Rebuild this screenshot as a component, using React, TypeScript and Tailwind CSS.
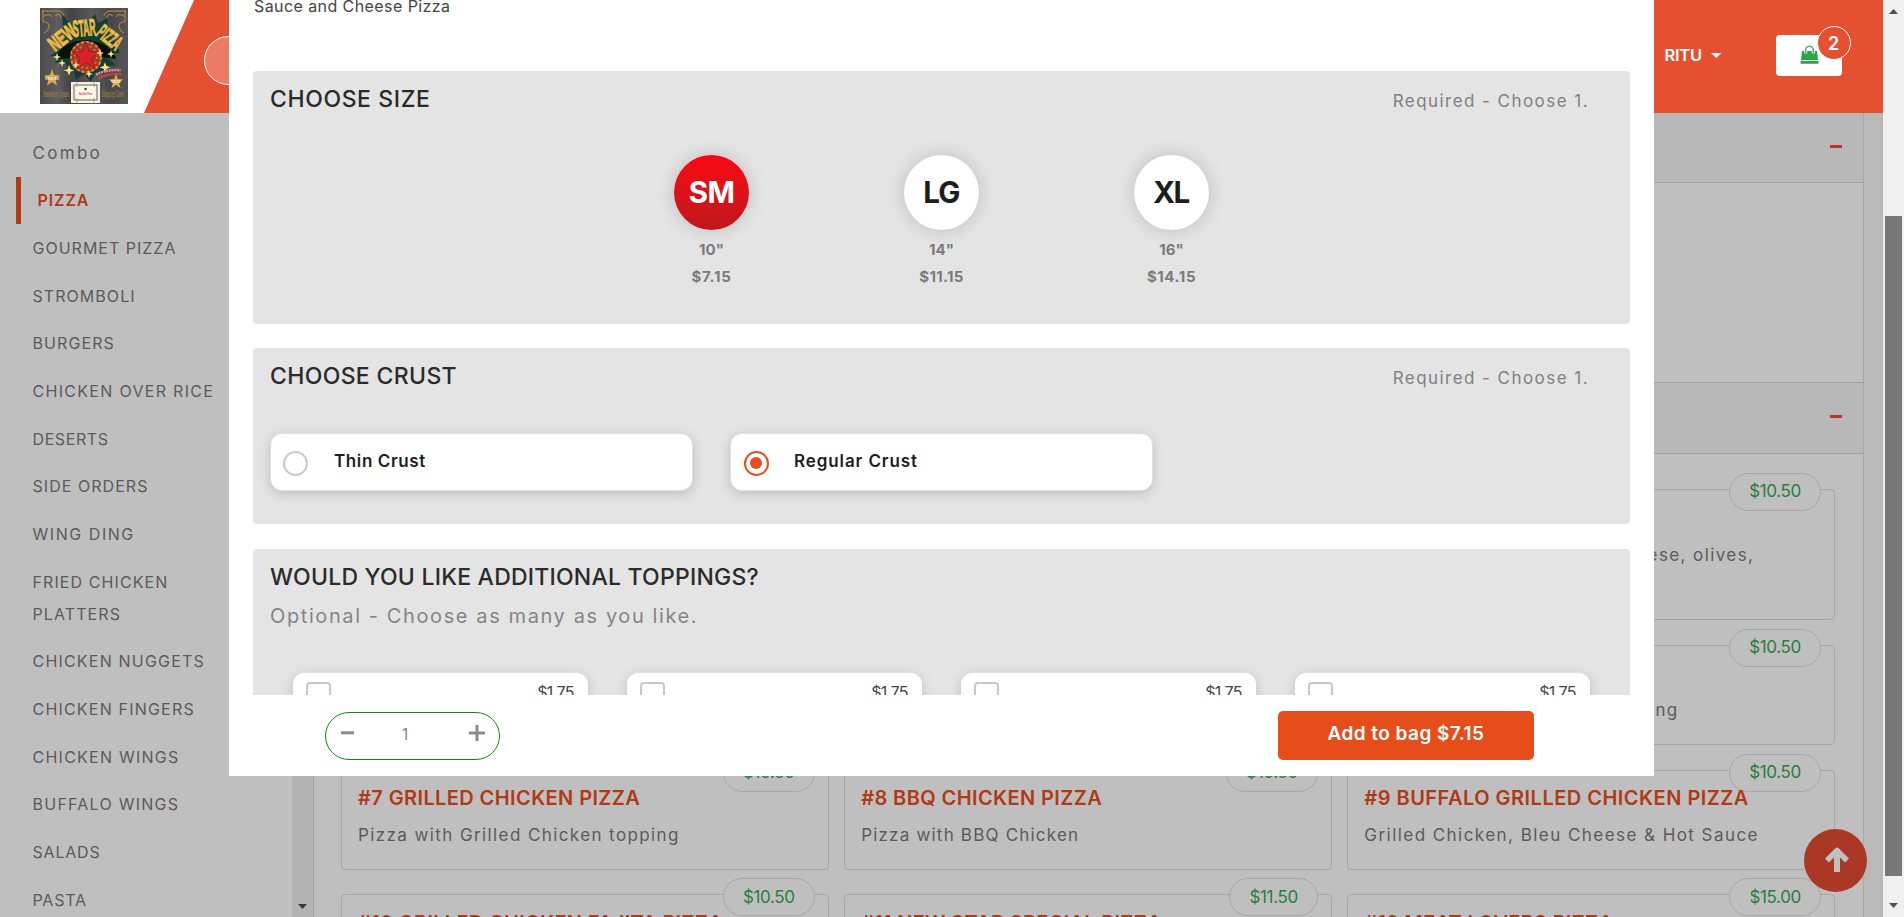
type MenuItem = { label: string; tracking: string; active?: boolean };

const menu: MenuItem[] = [
  { label: "Combo", tracking: "text-[17px] tracking-[2.3px]" },
  { label: "PIZZA", tracking: "text-[16px] tracking-[0.9px]", active: true },
  { label: "GOURMET PIZZA", tracking: "text-[16px] tracking-[1px]" },
  { label: "STROMBOLI", tracking: "text-[16px] tracking-[1.05px]" },
  { label: "BURGERS", tracking: "text-[16px] tracking-[1.1px]" },
  { label: "CHICKEN OVER RICE", tracking: "text-[16px] tracking-[1.3px]" },
  { label: "DESERTS", tracking: "text-[16px] tracking-[0.6px]" },
  { label: "SIDE ORDERS", tracking: "text-[16px] tracking-[1.05px]" },
  { label: "WING DING", tracking: "text-[16px] tracking-[1.55px]" },
  { label: "FRIED CHICKEN PLATTERS", tracking: "text-[16px] tracking-[1.1px]" },
  { label: "CHICKEN NUGGETS", tracking: "text-[16px] tracking-[1.2px]" },
  { label: "CHICKEN FINGERS", tracking: "text-[16px] tracking-[1.2px]" },
  { label: "CHICKEN WINGS", tracking: "text-[16px] tracking-[1.25px]" },
  { label: "BUFFALO WINGS", tracking: "text-[16px] tracking-[1.25px]" },
  { label: "SALADS", tracking: "text-[16px] tracking-[0.8px]" },
  { label: "PASTA", tracking: "text-[16px] tracking-[0.8px]" },
];

type Dish = {
  price: string;
  title?: string;
  text?: string;
  titleStyle?: string;
  textStyle?: string;
};

const dishes: Dish[] = [
  { price: "$10.50" },
  { price: "$10.50" },
  { price: "$10.50", text: "ese, olives,", textStyle: "w-[390px] text-right tracking-[1.4px]" },
  { price: "$10.50" },
  { price: "$10.50" },
  { price: "$10.50", text: "ng", textStyle: "w-[314px] text-right tracking-[1.2px]" },
  {
    price: "$10.50",
    title: "#7 GRILLED CHICKEN PIZZA",
    titleStyle: "tracking-[0.4px]",
    text: "Pizza with Grilled Chicken topping",
    textStyle: "tracking-[1.4px]",
  },
  {
    price: "$10.50",
    title: "#8 BBQ CHICKEN PIZZA",
    titleStyle: "tracking-[0.4px]",
    text: "Pizza with BBQ Chicken",
    textStyle: "tracking-[1.2px]",
  },
  {
    price: "$10.50",
    title: "#9 BUFFALO GRILLED CHICKEN PIZZA",
    titleStyle: "tracking-[0.48px]",
    text: "Grilled Chicken, Bleu Cheese & Hot Sauce",
    textStyle: "tracking-[1.45px]",
  },
  { price: "$10.50", title: "#10 GRILLED CHICKEN FAJITA PIZZA", titleStyle: "tracking-[0.3px]" },
  { price: "$11.50", title: "#11 NEW STAR SPECIAL PIZZA", titleStyle: "tracking-[0.3px]" },
  { price: "$15.00", title: "#12 MEAT LOVERS PIZZA", titleStyle: "tracking-[0.3px]" },
];

const sizes = [
  { code: "SM", inches: '10"', price: "$7.15", selected: true, codeStyle: "tracking-[-0.7px]", priceStyle: "tracking-[0.7px]" },
  { code: "LG", inches: '14"', price: "$11.15", selected: false, codeStyle: "tracking-[-0.8px]", priceStyle: "tracking-[0.3px]" },
  { code: "XL", inches: '16"', price: "$14.15", selected: false, codeStyle: "-ml-px tracking-[-1.5px]", priceStyle: "tracking-[0.6px]" },
];

function Logo() {
  return (
    <svg width="88" height="96" viewBox="0 0 88 96">
      <defs>
        <linearGradient id="wood" x1="0" x2="1" y1="0" y2="0">
          <stop offset="0" stopColor="#4b4b4d" />
          <stop offset="0.2" stopColor="#5d5d60" />
          <stop offset="0.35" stopColor="#434345" />
          <stop offset="0.6" stopColor="#5a5a5d" />
          <stop offset="0.8" stopColor="#48484a" />
          <stop offset="1" stopColor="#555557" />
        </linearGradient>
        <linearGradient id="gold" x1="0" x2="0" y1="0" y2="1">
          <stop offset="0" stopColor="#fbe67a" />
          <stop offset="0.55" stopColor="#e3ab33" />
          <stop offset="1" stopColor="#f8dc6c" />
        </linearGradient>
      </defs>
      <rect width="88" height="96" fill="url(#wood)" />
      <path
        d="M22 6 L31 17 L38 11 L44 18 L55 6 L58 15 L68 10 L67 22 L80 44 L67 50 L76 57 L66 58 L65 67 L56 64 L51 74 L44 66 L36 72 L34 64 L24 64 L28 57 L14 54 L24 49 L10 48 L25 38 Z"
        fill="#123f33"
      />
      <path d="M17 51 C20 26 70 26 76 51 L62 49 C58 31 35 31 30 50 Z" fill="#07120f" />
      <circle cx="46" cy="49" r="16" fill="#a53a20" />
      <circle cx="46" cy="49" r="15" fill="none" stroke="#d28842" strokeWidth="2" strokeDasharray="3 2" />
      <circle cx="46" cy="49" r="11" fill="none" stroke="#c9773c" strokeWidth="2" strokeDasharray="2 3" />
      <path
        d="M46 34 L49.5 44 L60 44 L51.5 50 L55 61 L46 54 L37 61 L40 50 L32 44 L43 44 Z"
        fill="#e01f2c"
        stroke="#8d1420"
        strokeWidth="0.7"
      />
      <g fontFamily="Liberation Sans" fontWeight="700" fill="url(#gold)" stroke="#e8b840" strokeWidth="0.6">
        <text transform="translate(15 44) rotate(-38) scale(1.05 1.750)" fontSize="12">NEW</text>
        <text transform="translate(33.500 29) rotate(-5) scale(0.72 1.950)" fontSize="12">STAR</text>
        <text transform="translate(55 27) rotate(38) scale(0.75 1.750)" fontSize="12">PIZZA</text>
      </g>
      <g fill="none" stroke="#c48f32" strokeWidth="1">
        <path d="M2 3 H18 Q24 4 24 8 M3 2 V14 Q9 13 9 19 Q8 24 4 25 M4 8 Q10 5 12 9 M15 8 Q20 4 21 10" />
        <path d="M86 3 H70 Q64 4 64 8 M85 2 V14 Q79 13 79 19 Q80 24 84 25 M84 8 Q78 5 76 9 M73 8 Q68 4 67 10" />
      </g>
      <g fill="#f5e28a">
        <path d="M17 45l1 3 3 1-3 1-1 3-1-3-3-1 3-1zM22 51l1 3 3 1-3 1-1 3-1-3-3-1 3-1zM29 57l1.4 4 4 1.400-4 1.400-1.400 4-1.400-4-4-1.400 4-1.400zM60 41l1 3 3 1-3 1-1 3-1-3-3-1 3-1zM71 42l1 3 3 1-3 1-1 3-1-3-3-1 3-1zM65 54l1.400 4 4 1.400-4 1.400-1.400 4-1.400-4-4-1.400 4-1.400zM49 62l1 3 3 1-3 1-1 3-1-3-3-1 3-1zM36 53l1 3 3 1-3 1-1 3-1-3-3-1 3-1z" />
        <path d="M12 61l2 6 6 .5-4.500 4 1.500 6-5-3.500-5 3.500 1.500-6-4.500-4 6-.5zM76 66l2 5 5 .5-4 3.500 1.500 5-4.500-3-4.500 3 1.500-5-4-3.500 5-.5z" fill="#dcab42" />
      </g>
      <g fontFamily="Liberation Serif" fontWeight="700">
        <text x="5" y="72" fontSize="5" fill="#fff" textLength="14" lengthAdjust="spacingAndGlyphs">SAUCES</text>
        <text x="71" y="75" fontSize="4.500" fill="#fff" textLength="10" lengthAdjust="spacingAndGlyphs">TRAY</text>
        <text x="3" y="89" fontSize="10" fontWeight="400" fill="#b58a34" textLength="26" lengthAdjust="spacingAndGlyphs">Strawberry Square</text>
        <text x="62" y="89" fontSize="10" fontWeight="400" fill="#b58a34" textLength="22" lengthAdjust="spacingAndGlyphs">Shopping Center</text>
      </g>
      <g transform="rotate(-8 68 66)" fill="none" strokeWidth="2.600" strokeDasharray="2 0.7">
        <path d="M56 65 Q68 61 81 64" stroke="#f08a92" />
        <path d="M58 69 Q69 65 81 68" stroke="#d94450" />
      </g>
      <rect x="31" y="74" width="29" height="21" fill="#f6f1dd" />
      <rect x="34" y="77" width="23" height="15" fill="none" stroke="#444" strokeWidth="0.8" />
      <path d="M37 74v21M54 74v21" stroke="#777" strokeWidth="0.5" />
      <rect x="36" y="79" width="19" height="11" fill="#fbf8ea" />
      <circle cx="45.500" cy="81" r="1.200" fill="#333" />
      <text x="39" y="87" fontSize="3.500" fontFamily="Liberation Sans" fontWeight="700" fill="#d8252b" textLength="13" lengthAdjust="spacingAndGlyphs">
        New Star Pizza
      </text>
    </svg>
  );
}

function Header() {
  return (
    <header className="flex h-[113px] w-full shrink-0 bg-[#e55031]">
      <div className="flex h-full w-[194px] shrink-0 items-start bg-white pl-10 pt-2 [clip-path:polygon(0_0,100%_0,144px_100%,0_100%)]">
        <Logo />
      </div>
      <div className="ml-[10px] mt-9 h-[49px] w-[300px] shrink-0 rounded-full border border-white bg-[#ec7a65]" />
      <div className="ml-auto flex h-full items-start pr-[41px]">
        <div className="mt-[43px] flex h-6 items-center text-[16.500px] font-semibold tracking-[-0.2px] text-white">
          RITU
          <svg className="ml-[9px] mt-px" width="11" height="6" viewBox="0 0 11 6">
            <path d="M0 0h10.500L5.250 5z" fill="#fff" />
          </svg>
        </div>
        <div className="relative ml-[54px] mt-[35px] h-[41px] w-[66px] rounded bg-white">
          <svg className="absolute left-6 top-[10px]" width="20" height="20" viewBox="0 0 20 20">
            <path d="M2 6h15l1 9H1zM.7 16h17.800v2.700H.5z" fill="#28a745" />
            <path d="M5.700 8.500V5a3.800 3.800 0 0 1 7.600 0v3.500" fill="none" stroke="#fff" strokeWidth="3" />
            <path d="M5.700 8.500V5a3.800 3.800 0 0 1 7.600 0v3.500" fill="none" stroke="#4fae69" strokeWidth="1.500" />
          </svg>
          <span className="absolute left-[41px] top-[-9px] flex size-[34px] items-center justify-center rounded-full border border-white bg-[#e55031] pr-px text-[18px] font-semibold text-white">
            2
          </span>
        </div>
      </div>
    </header>
  );
}

function Sidebar() {
  return (
    <nav className="w-[292px] shrink-0 overflow-hidden bg-[#bfbfbf] pt-4 text-[#5b5b5b]">
      {menu.map((item) => (
        <div
          key={item.label}
          className={
            item.active
              ? "ml-4 border-l-[5px] border-[#b03a16] pb-[7.500px] pl-[16.500px] pt-[8.500px] text-[#b03a16]"
              : "ml-5 pb-[7.500px] pl-[12.500px] pt-[8.500px]"
          }
        >
          <div className={`w-[190px] leading-[31.700px] ${item.active ? "font-semibold" : ""} ${item.tracking}`}>
            {item.label}
          </div>
        </div>
      ))}
    </nav>
  );
}

function Minus() {
  return <span className="h-[3px] w-3 bg-[#b03a25]" />;
}

function DishCard({ dish }: { dish: Dish }) {
  return (
    <article className="relative rounded-[4px] border border-[#a6a6a6] pl-4">
      <span className="absolute right-[13px] top-[-17px] flex h-[38px] items-center rounded-full border border-[#a5a8aa] bg-[#bfbfbf] px-[19px] text-[17px] tracking-[-0.35px] text-[#2a7d3e]">
        {dish.price}
      </span>
      <h3 className={`relative mt-[11.500px] h-8 whitespace-nowrap text-[20px] font-semibold leading-8 text-[#b03a16] ${dish.titleStyle ?? ""}`}>
        {dish.title}
      </h3>
      <p className={`mt-[5px] whitespace-nowrap text-[17px] leading-8 text-[#5b5b5b] ${dish.textStyle ?? ""}`}>{dish.text}</p>
    </article>
  );
}

function Catalog() {
  return (
    <main className="flex w-[1550px] shrink-0 flex-col border-r border-[#a6a6a6] bg-[#bfbfbf]">
      <div className="flex h-[70px] shrink-0 items-center justify-end border-b border-[#a2a2a2] bg-[#b8b8b8] pb-[3px] pr-[21px]">
        <Minus />
      </div>
      <div className="h-[199px] shrink-0" />
      <div className="flex h-[72px] shrink-0 items-center justify-end border-y border-[#a2a2a2] bg-[#b8b8b8] pb-[3px] pr-[21px]">
        <Minus />
      </div>
      <div className="grid shrink-0 grid-cols-3 grid-rows-[131px_100px_100px_100px] gap-x-[15.500px] gap-y-[24.800px] pl-[27px] pr-7 pt-[35px]">
        {dishes.map((dish, i) => (
          <DishCard key={i} dish={dish} />
        ))}
      </div>
    </main>
  );
}

function SectionHeading({ title, note, tracking }: { title: string; note?: string; tracking: string }) {
  return (
    <div className="flex h-[46px] items-baseline justify-between pl-[17px] pr-[41px] pt-[9.500px]">
      <h2 className={`text-[23px] font-medium leading-9 text-[#2b2b2b] ${tracking}`}>{title}</h2>
      {note && <span className="text-[17px] leading-9 tracking-[1.45px] text-[#808080]">{note}</span>}
    </div>
  );
}

function CrustOption({ label, selected, tracking }: { label: string; selected: boolean; tracking: string }) {
  return (
    <div className="flex h-[58px] w-[423px] items-center rounded-xl border border-[#dfe0e4] bg-white pl-3 shadow-[0_3px_12px_rgba(0,0,0,0.17)]">
      <span
        className={
          selected
            ? "ml-px mt-[3px] flex size-[25px] items-center justify-center rounded-full border-2 border-[#e54d1a]"
            : "mt-[3px] size-[25px] rounded-full border-2 border-[#c8c8c8]"
        }
      >
        {selected && <span className="mb-px mr-px size-3 rounded-full bg-[#e54d1a]" />}
      </span>
      <span className={`text-[17px] font-semibold text-[#1d1d1d] ${tracking}`}>{label}</span>
    </div>
  );
}

function OrderDialog() {
  return (
    <section className="absolute left-[229px] top-0 flex h-[776px] w-[1425px] flex-col bg-white">
      <div className="h-[695px] shrink-0 overflow-hidden px-6">
        <p className="-mt-[6px] pl-px text-[16px] leading-6 tracking-[0.42px] text-[#444]">Sauce and Cheese Pizza</p>

        <div className="mt-[53px] h-[253px] rounded-[4px] bg-[#e4e4e4]">
          <SectionHeading title="CHOOSE SIZE" note="Required - Choose 1." tracking="tracking-[0.6px]" />
          <div className="mt-[38px] flex justify-center">
            {sizes.map((size) => (
              <div key={size.code} className="flex w-[230px] flex-col items-center">
                <span
                  className={
                    size.selected
                      ? "flex size-[75px] items-center justify-center rounded-full bg-linear-to-b from-[#fa0612] to-[#bf171c] text-[29.500px] font-bold text-white shadow-[0_0_18px_rgba(0,0,0,0.17)]"
                      : "flex size-[75px] items-center justify-center rounded-full bg-white text-[29.500px] font-bold text-[#1d1d1d] shadow-[0_0_18px_rgba(0,0,0,0.17)]"
                  }
                >
                  <span className={size.codeStyle}>{size.code}</span>
                </span>
                <span className="mt-[6px] text-[15px] font-bold leading-[27px] text-[#7b7b7b]">{size.inches}</span>
                <span className={`text-[15px] font-bold leading-[27px] text-[#7b7b7b] ${size.priceStyle}`}>{size.price}</span>
              </div>
            ))}
          </div>
        </div>

        <div className="mt-6 h-[176px] rounded-[4px] bg-[#e4e4e4] pt-[0.5px]">
          <SectionHeading title="CHOOSE CRUST" note="Required - Choose 1." tracking="tracking-[0.35px]" />
          <div className="mt-[38px] flex gap-[37px] pl-[17px]">
            <CrustOption label="Thin Crust" selected={false} tracking="ml-[26px] tracking-[0.6px]" />
            <CrustOption label="Regular Crust" selected tracking="ml-[25px] tracking-[0.9px]" />
          </div>
        </div>

        <div className="mt-[25px] h-[300px] rounded-[4px] bg-[#e4e4e4] pt-[0.5px]">
          <SectionHeading title="WOULD YOU LIKE ADDITIONAL TOPPINGS?" tracking="tracking-[0.22px]" />
          <p className="mt-[5px] pl-[17px] text-[20px] leading-[30px] tracking-[1.600px] text-[#858585]">
            Optional - Choose as many as you like.
          </p>
          <div className="mt-[41px] flex gap-[39px] pl-10">
            {[0, 1, 2, 3].map((i) => (
              <div
                key={i}
                className="flex h-[80px] w-[295px] items-start justify-between rounded-xl border-t border-[#dde1e7] bg-white pl-[13px] pr-[14px] pt-[9px] shadow-[0_3px_12px_rgba(0,0,0,0.17)]"
              >
                <span className="size-[25px] rounded-[4px] border-2 border-[#c8c8c8]" />
                <span className="-mt-[1.500px] text-[16px] leading-6 tracking-[-0.6px] text-[#444]">$1.75</span>
              </div>
            ))}
          </div>
        </div>
      </div>

      <footer className="flex h-[81px] shrink-0 items-start justify-between pl-24 pr-[120px] pt-4">
        <div className="mt-px flex h-[48px] w-[175px] items-center justify-between rounded-full border border-[#128a12] pb-[7px] pl-[15px] pr-[13px] text-[#8a8a8a]">
          <svg width="14" height="18" viewBox="0 0 14 18">
            <path d="M0 8.800h13" stroke="currentColor" strokeWidth="3" />
          </svg>
          <span className="mr-[13px] pt-[3px] text-[16px]">1</span>
          <svg width="18" height="18" viewBox="0 0 18 18">
            <path d="M1 9h16M9 1v16" stroke="currentColor" strokeWidth="3" />
          </svg>
        </div>
        <button className="flex h-[49px] w-[256px] items-center justify-center rounded-[5px] bg-[#e54d1a] pb-[3px] text-[19px] font-semibold tracking-[0.45px] text-white">
          Add to bag $7.15
        </button>
      </footer>
    </section>
  );
}

export default function App() {
  return (
    <div className="relative flex h-[917px] w-[1904px] overflow-hidden bg-[#b9b9b9] font-['Inter',sans-serif]">
      <div className="flex h-full w-[1883px] shrink-0 flex-col">
        <Header />
        <div className="flex h-[804px] shrink-0 overflow-hidden">
          <Sidebar />
          <div className="flex w-[22px] shrink-0 items-end justify-center border-r border-[#a6a6a6] bg-[#b3b3b3] pb-2">
            <svg width="9" height="5" viewBox="0 0 9 5">
              <path d="M0 0h9L4.500 5z" fill="#3a3a3a" />
            </svg>
          </div>
          <Catalog />
        </div>
      </div>

      <div className="flex w-[21px] shrink-0 flex-col items-center bg-[#f0f0f0] pt-[9px]">
        <svg width="9" height="5" viewBox="0 0 9 5">
          <path d="M0 5h9L4.500 0z" fill="#505050" />
        </svg>
        <div className="mt-[202px] h-[660px] w-[17px] bg-[#787878]" />
        <svg className="mt-[27px]" width="9" height="5" viewBox="0 0 9 5">
          <path d="M0 0h9L4.500 5z" fill="#505050" />
        </svg>
      </div>

      <OrderDialog />

      <button className="absolute left-[1804px] top-[829px] flex size-[63px] items-center justify-center rounded-full bg-[#aa3825] pb-[3px] pl-[3px] text-[#c0c0c0]">
        <svg width="26" height="25" viewBox="0 0 26 25">
          <path
            d="M3 13.500L13 3.500l10 10"
            fill="none"
            stroke="currentColor"
            strokeWidth="5.500"
            strokeLinejoin="round"
          />
          <path d="M13 5v17.500" stroke="currentColor" strokeWidth="6" strokeLinecap="square" fill="none" />
        </svg>
      </button>
    </div>
  );
}
